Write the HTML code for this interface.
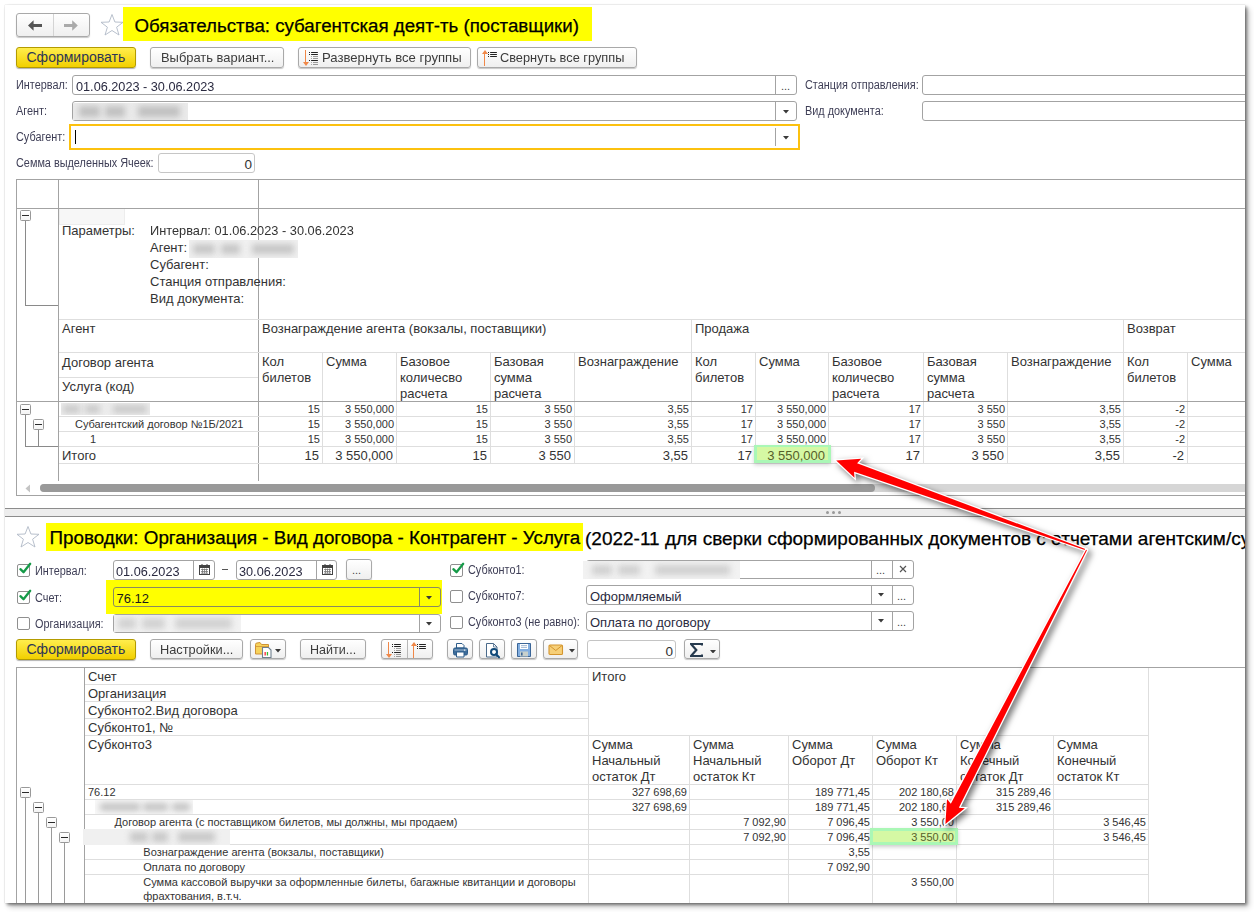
<!DOCTYPE html>
<html><head><meta charset="utf-8">
<style>
*{margin:0;padding:0;box-sizing:border-box}
html,body{width:1254px;height:912px;overflow:hidden;background:#fff;font-family:"Liberation Sans",sans-serif;color:#333}
.a{position:absolute}
.t{position:absolute;white-space:nowrap;line-height:1}
#win{position:absolute;left:5px;top:5px;width:1240px;height:898px;background:#fff;overflow:hidden;
 box-shadow:0 0 1px rgba(0,0,0,.25),2px 2px 3px rgba(0,0,0,.45),4px 4px 6px rgba(0,0,0,.2)}
.btn{position:absolute;border:1px solid #a9a9a9;border-radius:3px;background:linear-gradient(#fff,#efefef);box-shadow:0 1px 1px rgba(0,0,0,.22)}
.ybtn{position:absolute;border:1px solid #c9a400;border-radius:3px;background:linear-gradient(#ffe94a,#f5cf00);box-shadow:0 1px 1px rgba(0,0,0,.3)}
.fld{position:absolute;border:1px solid #a3a3a3;border-radius:3px;background:#fff}
.tb{position:absolute;width:11px;height:11px;border:1px solid #999;border-radius:1.5px;background:linear-gradient(#fff,#f4f4f4)}
.tb:after{content:"";position:absolute;left:1px;top:4px;width:7px;height:1.2px;background:#2a2a2a}
</style></head><body>
<div id="win"><div id="pg" class="a" style="left:-5px;top:-5px;width:1254px;height:912px">
<div class="a" style="left:16px;top:13px;width:74px;height:24px;border:1px solid #a9a9a9;border-radius:3px;background:linear-gradient(#fff,#efefef);box-shadow:0 1px 1px rgba(0,0,0,.22)"></div>
<div class="a" style="left:53px;top:14px;width:1px;height:22px;background:#d4d4d4"></div>
<svg class="a" style="left:27px;top:19.8px" width="16" height="12" viewBox="0 0 16 12"><path d="M1 5.5 L6.6 0.3 L6.6 4 L15 4 L15 7 L6.6 7 L6.6 10.8 Z" fill="#555"/></svg>
<svg class="a" style="left:63px;top:19.8px" width="16" height="12" viewBox="0 0 16 12"><path d="M14.8 5.5 L9.2 0.3 L9.2 4 L1 4 L1 7 L9.2 7 L9.2 10.8 Z" fill="#aaa"/></svg>
<svg class="a" style="left:100px;top:13px" width="24" height="24" viewBox="0 0 24 24"><path d="M12 1.5 L14.9 9 L23 9.3 L16.6 14.2 L19 22 L12 17.5 L5 22 L7.4 14.2 L1 9.3 L9.1 9 Z" fill="#fff" stroke="#b0b9c6" stroke-width="0.9"/></svg>
<div class="a" style="left:123px;top:7px;width:469px;height:34px;background:#ff0"></div>
<div class="t" style="left:134.5px;top:16.67px;font-size:18.7px;color:#000;-webkit-text-stroke:0.25px #000">Обязательства: субагентская деят-ть (поставщики)</div>
<div class="a" style="left:16px;top:47px;width:120px;height:21px;border:1px solid #b39b00;border-radius:3px;background:linear-gradient(#ffed4d,#f2d000);box-shadow:0 1px 1px rgba(0,0,0,.3)"></div>
<div class="t" style="left:26.5px;top:50.15px;font-size:14px;color:#2c3556;">Сформировать</div>
<div class="a" style="left:150px;top:47px;width:134px;height:21px;border:1px solid #a9a9a9;border-radius:3px;background:linear-gradient(#fff,#efefef);box-shadow:0 1px 1px rgba(0,0,0,.22)"></div>
<div class="t" style="left:160.5px;top:51.49px;font-size:13.6px;color:#3c3c3c;transform:scaleX(0.95);transform-origin:0 0;">Выбрать вариант...</div>
<div class="a" style="left:298px;top:47px;width:173px;height:21px;border:1px solid #a9a9a9;border-radius:3px;background:linear-gradient(#fff,#efefef);box-shadow:0 1px 1px rgba(0,0,0,.22)"></div>
<div class="t" style="left:321.5px;top:51.49px;font-size:13.6px;color:#3c3c3c;transform:scaleX(0.965);transform-origin:0 0;">Развернуть все группы</div>
<div class="a" style="left:477px;top:47px;width:160px;height:21px;border:1px solid #a9a9a9;border-radius:3px;background:linear-gradient(#fff,#efefef);box-shadow:0 1px 1px rgba(0,0,0,.22)"></div>
<div class="t" style="left:500px;top:51.49px;font-size:13.6px;color:#3c3c3c;transform:scaleX(0.94);transform-origin:0 0;">Свернуть все группы</div>
<div class="a" style="left:304.75px;top:50.0px;width:1.5px;height:12px;background:#f08848"></div>
<svg class="a" style="left:302.5px;top:61.5px" width="6" height="4" viewBox="0 0 6 4"><path d="M0 0 L6 0 L3 4 Z" fill="#f08848"/></svg>
<div class="a" style="left:309.0px;top:51.9px;width:1.3000000000000114px;height:1.3000000000000043px;background:#222"></div>
<div class="a" style="left:311.0px;top:51.9px;width:6.699999999999989px;height:1.3000000000000043px;background:#222;border-radius:1px"></div>
<div class="a" style="left:309.0px;top:53.9px;width:1.3000000000000114px;height:1.3000000000000043px;background:#222"></div>
<div class="a" style="left:311.0px;top:53.9px;width:6.699999999999989px;height:1.3000000000000043px;background:#222;border-radius:1px"></div>
<div class="a" style="left:311.0px;top:56.0px;width:1.1999999999999886px;height:1.1000000000000014px;background:#aaa"></div>
<div class="a" style="left:313.0px;top:56.0px;width:4.699999999999989px;height:1.1000000000000014px;background:#999"></div>
<div class="a" style="left:311.0px;top:58.0px;width:1.1999999999999886px;height:1.1000000000000014px;background:#aaa"></div>
<div class="a" style="left:313.0px;top:58.0px;width:4.699999999999989px;height:1.1000000000000014px;background:#999"></div>
<div class="a" style="left:309.0px;top:59.9px;width:1.3000000000000114px;height:1.3000000000000043px;background:#222"></div>
<div class="a" style="left:311.0px;top:59.9px;width:6.699999999999989px;height:1.3000000000000043px;background:#222;border-radius:1px"></div>
<div class="a" style="left:311.0px;top:62.0px;width:1.1999999999999886px;height:1.1000000000000014px;background:#aaa"></div>
<div class="a" style="left:313.0px;top:62.0px;width:4.699999999999989px;height:1.1000000000000014px;background:#999"></div>
<div class="a" style="left:311.0px;top:64.0px;width:1.1999999999999886px;height:1.0999999999999943px;background:#aaa"></div>
<div class="a" style="left:313.0px;top:64.0px;width:4.699999999999989px;height:1.0999999999999943px;background:#999"></div>
<div class="a" style="left:483.75px;top:53.0px;width:1.5px;height:12.5px;background:#f08848"></div>
<svg class="a" style="left:481.5px;top:50.0px" width="6" height="4" viewBox="0 0 6 4"><path d="M0 4 L6 4 L3 0 Z" fill="#f08848"/></svg>
<div class="a" style="left:488.0px;top:51.9px;width:1.3000000000000114px;height:1.3000000000000043px;background:#222"></div>
<div class="a" style="left:490.0px;top:51.9px;width:6.699999999999989px;height:1.3000000000000043px;background:#222;border-radius:1px"></div>
<div class="a" style="left:488.0px;top:53.9px;width:1.3000000000000114px;height:1.3000000000000043px;background:#222"></div>
<div class="a" style="left:490.0px;top:53.9px;width:6.699999999999989px;height:1.3000000000000043px;background:#222;border-radius:1px"></div>
<div class="a" style="left:488.0px;top:55.9px;width:1.3000000000000114px;height:1.3000000000000043px;background:#222"></div>
<div class="a" style="left:490.0px;top:55.9px;width:6.699999999999989px;height:1.3000000000000043px;background:#222;border-radius:1px"></div>
<div class="t" style="left:16px;top:79.42px;font-size:12.5px;color:#3e3e56;transform:scaleX(0.87);transform-origin:0 0;">Интервал:</div>
<div class="a" style="left:72px;top:75px;width:725px;height:20px;border:1px solid #a3a3a3;border-radius:3px;background:#fff"></div>
<div class="a" style="left:775px;top:76px;width:1px;height:18px;background:#a3a3a3"></div>
<div class="t" style="left:781px;top:80.69px;font-size:11px;color:#444;">...</div>
<div class="t" style="left:75.5px;top:79.57px;font-size:13.5px;color:#2a2a40;transform:scaleX(0.94);transform-origin:0 0;">01.06.2023 - 30.06.2023</div>
<div class="t" style="left:16px;top:105.42px;font-size:12.5px;color:#3e3e56;transform:scaleX(0.87);transform-origin:0 0;">Агент:</div>
<div class="a" style="left:72px;top:101px;width:725px;height:20px;border:1px solid #a3a3a3;border-radius:3px;background:#fff"></div>
<div class="a" style="left:73px;top:103px;width:115px;height:17px;background:#eaeaea;overflow:hidden"><div class="a" style="left:6px;top:3.4px;width:21px;height:10.2px;background:#c0c0c0;filter:blur(3px)"></div><div class="a" style="left:32px;top:3.4px;width:20px;height:10.2px;background:#c0c0c0;filter:blur(3px)"></div><div class="a" style="left:65px;top:3.4px;width:42px;height:10.2px;background:#c0c0c0;filter:blur(3px)"></div></div>
<div class="a" style="left:775px;top:102px;width:1px;height:18px;background:#a3a3a3"></div>
<svg class="a" style="left:783px;top:110px" width="6" height="3.5" viewBox="0 0 6 3.5"><path d="M0 0 L6 0 L3 3.5 Z" fill="#3a3a3a"/></svg>
<div class="t" style="left:16px;top:131.42px;font-size:12.5px;color:#3e3e56;transform:scaleX(0.87);transform-origin:0 0;">Субагент:</div>
<div class="a" style="left:69px;top:124px;width:731px;height:26px;border:2px solid #fcc10f"></div>
<div class="a" style="left:75px;top:130px;width:1px;height:14px;background:#000"></div>
<div class="a" style="left:775px;top:128px;width:1px;height:18px;background:#a3a3a3"></div>
<svg class="a" style="left:783px;top:136px" width="6" height="3.5" viewBox="0 0 6 3.5"><path d="M0 0 L6 0 L3 3.5 Z" fill="#3a3a3a"/></svg>
<div class="t" style="left:16px;top:157.42px;font-size:12.5px;color:#3e3e56;transform:scaleX(0.87);transform-origin:0 0;">Семма выделенных Ячеек:</div>
<div class="a" style="left:158px;top:153px;width:97px;height:20px;border:1px solid #c6c6c6;border-radius:3px;background:#fff"></div>
<div class="t" style="right:1002px;top:157.57px;font-size:13.5px;color:#333;">0</div>
<div class="t" style="left:805px;top:79.42px;font-size:12.5px;color:#3e3e56;transform:scaleX(0.87);transform-origin:0 0;">Станция отправления:</div>
<div class="a" style="left:922px;top:75px;width:340px;height:20px;border:1px solid #a3a3a3;border-radius:3px;background:#fff"></div>
<div class="t" style="left:805px;top:105.42px;font-size:12.5px;color:#3e3e56;transform:scaleX(0.87);transform-origin:0 0;">Вид документа:</div>
<div class="a" style="left:922px;top:101px;width:340px;height:20px;border:1px solid #a3a3a3;border-radius:3px;background:#fff"></div>
<div class="a" style="left:16px;top:179px;width:1229px;height:1px;background:#a3a3a3"></div>
<div class="a" style="left:16px;top:179px;width:1px;height:317px;background:#a3a3a3"></div>
<div class="a" style="left:16px;top:495px;width:1229px;height:1px;background:#a3a3a3"></div>
<div class="a" style="left:16px;top:208px;width:1229px;height:1px;background:#a3a3a3"></div>
<div class="a" style="left:58px;top:179px;width:1px;height:302px;background:#a3a3a3"></div>
<div class="a" style="left:258px;top:179px;width:1px;height:302px;background:#a3a3a3"></div>
<div class="a" style="left:59px;top:209px;width:66px;height:16px;background:#f7f7f7;border:1.5px solid #ededed;border-top:0"></div>
<div class="tb" style="left:20px;top:210px"></div>
<div class="a" style="left:25px;top:221px;width:1px;height:85px;background:#8a8a8a"></div>
<div class="a" style="left:25px;top:305px;width:33px;height:1px;background:#8a8a8a"></div>
<div class="t" style="left:62px;top:224.00px;font-size:13px;color:#333;">Параметры:</div>
<div class="t" style="left:150px;top:224.00px;font-size:13px;color:#333;transform:scaleX(0.983);transform-origin:0 0;">Интервал: 01.06.2023 - 30.06.2023</div>
<div class="t" style="left:150px;top:241.00px;font-size:13px;color:#333;">Агент:</div>
<div class="a" style="left:189px;top:240px;width:109px;height:18px;background:#f0f0f0;overflow:hidden"><div class="a" style="left:4px;top:3.6px;width:22px;height:10.8px;background:#c6c6c6;filter:blur(3px)"></div><div class="a" style="left:32px;top:3.6px;width:19px;height:10.8px;background:#c6c6c6;filter:blur(3px)"></div><div class="a" style="left:63px;top:3.6px;width:42px;height:10.8px;background:#c6c6c6;filter:blur(3px)"></div></div>
<div class="t" style="left:150px;top:258.00px;font-size:13px;color:#333;">Субагент:</div>
<div class="t" style="left:150px;top:275.00px;font-size:13px;color:#333;">Станция отправления:</div>
<div class="t" style="left:150px;top:292.00px;font-size:13px;color:#333;">Вид документа:</div>
<div class="a" style="left:59px;top:319px;width:1186px;height:1px;background:#dedede"></div>
<div class="a" style="left:59px;top:352px;width:1186px;height:1px;background:#dedede"></div>
<div class="a" style="left:59px;top:377px;width:199px;height:1px;background:#dedede"></div>
<div class="a" style="left:691px;top:319px;width:1px;height:144px;background:#dedede"></div>
<div class="a" style="left:1123px;top:319px;width:1px;height:144px;background:#dedede"></div>
<div class="a" style="left:322px;top:352px;width:1px;height:111px;background:#dedede"></div>
<div class="a" style="left:396px;top:352px;width:1px;height:111px;background:#dedede"></div>
<div class="a" style="left:490px;top:352px;width:1px;height:111px;background:#dedede"></div>
<div class="a" style="left:574px;top:352px;width:1px;height:111px;background:#dedede"></div>
<div class="a" style="left:755px;top:352px;width:1px;height:111px;background:#dedede"></div>
<div class="a" style="left:828px;top:352px;width:1px;height:111px;background:#dedede"></div>
<div class="a" style="left:923px;top:352px;width:1px;height:111px;background:#dedede"></div>
<div class="a" style="left:1007px;top:352px;width:1px;height:111px;background:#dedede"></div>
<div class="a" style="left:1187px;top:352px;width:1px;height:111px;background:#dedede"></div>
<div class="t" style="left:62px;top:322.00px;font-size:13px;color:#333;">Агент</div>
<div class="t" style="left:262px;top:322.00px;font-size:13px;color:#333;">Вознаграждение агента (вокзалы, поставщики)</div>
<div class="t" style="left:695px;top:322.00px;font-size:13px;color:#333;">Продажа</div>
<div class="t" style="left:1127px;top:322.00px;font-size:13px;color:#333;">Возврат</div>
<div class="t" style="left:62px;top:355.50px;font-size:13px;color:#333;">Договор агента</div>
<div class="t" style="left:62px;top:379.80px;font-size:13px;color:#333;">Услуга (код)</div>
<div class="t" style="left:262px;top:355.00px;font-size:13px;color:#333;">Кол</div>
<div class="t" style="left:262px;top:371.00px;font-size:13px;color:#333;">билетов</div>
<div class="t" style="left:326px;top:355.00px;font-size:13px;color:#333;">Сумма</div>
<div class="t" style="left:400px;top:355.00px;font-size:13px;color:#333;">Базовое</div>
<div class="t" style="left:400px;top:371.00px;font-size:13px;color:#333;">количесво</div>
<div class="t" style="left:400px;top:387.00px;font-size:13px;color:#333;">расчета</div>
<div class="t" style="left:494px;top:355.00px;font-size:13px;color:#333;">Базовая</div>
<div class="t" style="left:494px;top:371.00px;font-size:13px;color:#333;">сумма</div>
<div class="t" style="left:494px;top:387.00px;font-size:13px;color:#333;">расчета</div>
<div class="t" style="left:578px;top:355.00px;font-size:13px;color:#333;">Вознаграждение</div>
<div class="t" style="left:695px;top:355.00px;font-size:13px;color:#333;">Кол</div>
<div class="t" style="left:695px;top:371.00px;font-size:13px;color:#333;">билетов</div>
<div class="t" style="left:759px;top:355.00px;font-size:13px;color:#333;">Сумма</div>
<div class="t" style="left:832px;top:355.00px;font-size:13px;color:#333;">Базовое</div>
<div class="t" style="left:832px;top:371.00px;font-size:13px;color:#333;">количесво</div>
<div class="t" style="left:832px;top:387.00px;font-size:13px;color:#333;">расчета</div>
<div class="t" style="left:927px;top:355.00px;font-size:13px;color:#333;">Базовая</div>
<div class="t" style="left:927px;top:371.00px;font-size:13px;color:#333;">сумма</div>
<div class="t" style="left:927px;top:387.00px;font-size:13px;color:#333;">расчета</div>
<div class="t" style="left:1011px;top:355.00px;font-size:13px;color:#333;">Вознаграждение</div>
<div class="t" style="left:1127px;top:355.00px;font-size:13px;color:#333;">Кол</div>
<div class="t" style="left:1127px;top:371.00px;font-size:13px;color:#333;">билетов</div>
<div class="t" style="left:1191px;top:355.00px;font-size:13px;color:#333;">Сумма</div>
<div class="a" style="left:16px;top:401px;width:1229px;height:1px;background:#a3a3a3"></div>
<div class="a" style="left:59px;top:416px;width:1186px;height:1px;background:#dedede"></div>
<div class="a" style="left:59px;top:431px;width:1186px;height:1px;background:#dedede"></div>
<div class="a" style="left:59px;top:446px;width:1186px;height:1px;background:#dedede"></div>
<div class="a" style="left:59px;top:463px;width:1186px;height:1px;background:#dedede"></div>
<div class="tb" style="left:20px;top:404px"></div>
<div class="tb" style="left:33px;top:419px"></div>
<div class="a" style="left:25px;top:415px;width:1px;height:32px;background:#8a8a8a"></div>
<div class="a" style="left:38px;top:430px;width:1px;height:17px;background:#8a8a8a"></div>
<div class="a" style="left:25px;top:446px;width:33px;height:1px;background:#8a8a8a"></div>
<div class="a" style="left:61px;top:403px;width:89px;height:12px;background:#ededed;overflow:hidden"><div class="a" style="left:2px;top:2.4px;width:17px;height:7.2px;background:#c8c8c8;filter:blur(3px)"></div><div class="a" style="left:24px;top:2.4px;width:15px;height:7.2px;background:#c8c8c8;filter:blur(3px)"></div><div class="a" style="left:52px;top:2.4px;width:34px;height:7.2px;background:#c8c8c8;filter:blur(3px)"></div></div>
<div class="t" style="left:75px;top:418.69px;font-size:11px;color:#333;">Субагентский договор №1Б/2021</div>
<div class="t" style="left:90px;top:433.59px;font-size:11px;color:#333;">1</div>
<div class="t" style="left:62px;top:449.00px;font-size:13px;color:#333;">Итого</div>
<div class="a" style="left:754px;top:445px;width:77px;height:18px;background:#aaf7b6;box-shadow:0 2px 4px rgba(0,0,0,.18)"></div>
<div class="a" style="left:757px;top:447px;width:71px;height:13px;background:#d5f8a4"></div>
<div class="t" style="right:934px;top:403.79px;font-size:11px;color:#333;">15</div>
<div class="t" style="right:860px;top:403.79px;font-size:11px;color:#333;">3 550,000</div>
<div class="t" style="right:766px;top:403.79px;font-size:11px;color:#333;">15</div>
<div class="t" style="right:682px;top:403.79px;font-size:11px;color:#333;">3 550</div>
<div class="t" style="right:565px;top:403.79px;font-size:11px;color:#333;">3,55</div>
<div class="t" style="right:501px;top:403.79px;font-size:11px;color:#333;">17</div>
<div class="t" style="right:428px;top:403.79px;font-size:11px;color:#333;">3 550,000</div>
<div class="t" style="right:333px;top:403.79px;font-size:11px;color:#333;">17</div>
<div class="t" style="right:249px;top:403.79px;font-size:11px;color:#333;">3 550</div>
<div class="t" style="right:133px;top:403.79px;font-size:11px;color:#333;">3,55</div>
<div class="t" style="right:69px;top:403.79px;font-size:11px;color:#333;">-2</div>
<div class="t" style="right:934px;top:418.69px;font-size:11px;color:#333;">15</div>
<div class="t" style="right:860px;top:418.69px;font-size:11px;color:#333;">3 550,000</div>
<div class="t" style="right:766px;top:418.69px;font-size:11px;color:#333;">15</div>
<div class="t" style="right:682px;top:418.69px;font-size:11px;color:#333;">3 550</div>
<div class="t" style="right:565px;top:418.69px;font-size:11px;color:#333;">3,55</div>
<div class="t" style="right:501px;top:418.69px;font-size:11px;color:#333;">17</div>
<div class="t" style="right:428px;top:418.69px;font-size:11px;color:#333;">3 550,000</div>
<div class="t" style="right:333px;top:418.69px;font-size:11px;color:#333;">17</div>
<div class="t" style="right:249px;top:418.69px;font-size:11px;color:#333;">3 550</div>
<div class="t" style="right:133px;top:418.69px;font-size:11px;color:#333;">3,55</div>
<div class="t" style="right:69px;top:418.69px;font-size:11px;color:#333;">-2</div>
<div class="t" style="right:934px;top:433.59px;font-size:11px;color:#333;">15</div>
<div class="t" style="right:860px;top:433.59px;font-size:11px;color:#333;">3 550,000</div>
<div class="t" style="right:766px;top:433.59px;font-size:11px;color:#333;">15</div>
<div class="t" style="right:682px;top:433.59px;font-size:11px;color:#333;">3 550</div>
<div class="t" style="right:565px;top:433.59px;font-size:11px;color:#333;">3,55</div>
<div class="t" style="right:501px;top:433.59px;font-size:11px;color:#333;">17</div>
<div class="t" style="right:428px;top:433.59px;font-size:11px;color:#333;">3 550,000</div>
<div class="t" style="right:333px;top:433.59px;font-size:11px;color:#333;">17</div>
<div class="t" style="right:249px;top:433.59px;font-size:11px;color:#333;">3 550</div>
<div class="t" style="right:133px;top:433.59px;font-size:11px;color:#333;">3,55</div>
<div class="t" style="right:69px;top:433.59px;font-size:11px;color:#333;">-2</div>
<div class="t" style="right:935px;top:448.90px;font-size:13px;color:#333;">15</div>
<div class="t" style="right:861px;top:448.90px;font-size:13px;color:#333;">3 550,000</div>
<div class="t" style="right:767px;top:448.90px;font-size:13px;color:#333;">15</div>
<div class="t" style="right:683px;top:448.90px;font-size:13px;color:#333;">3 550</div>
<div class="t" style="right:566px;top:448.90px;font-size:13px;color:#333;">3,55</div>
<div class="t" style="right:502px;top:448.90px;font-size:13px;color:#333;">17</div>
<div class="t" style="right:429px;top:448.90px;font-size:13px;color:#55602a;">3 550,000</div>
<div class="t" style="right:334px;top:448.90px;font-size:13px;color:#333;">17</div>
<div class="t" style="right:250px;top:448.90px;font-size:13px;color:#333;">3 550</div>
<div class="t" style="right:134px;top:448.90px;font-size:13px;color:#333;">3,55</div>
<div class="t" style="right:70px;top:448.90px;font-size:13px;color:#333;">-2</div>
<svg class="a" style="left:25px;top:484px" width="6" height="9" viewBox="0 0 6 9"><path d="M5 0.5 L0.5 4.5 L5 8.5 Z" fill="#c4c4c4"/></svg>
<div class="a" style="left:40px;top:484px;width:1205px;height:8px;background:#d6d6d6;border-radius:4px 0 0 4px"></div>
<div class="a" style="left:40px;top:484px;width:835px;height:8px;background:#999;border-radius:4px"></div>
<div class="a" style="left:5px;top:508px;width:1240px;height:1px;background:#8c8c8c"></div>
<div class="a" style="left:5px;top:509px;width:1240px;height:7px;background:#ededed"></div>
<div class="a" style="left:5px;top:516px;width:1240px;height:1px;background:#8c8c8c"></div>
<div class="a" style="left:826px;top:511px;width:3px;height:3px;background:#999;border-radius:50%"></div>
<div class="a" style="left:832px;top:511px;width:3px;height:3px;background:#999;border-radius:50%"></div>
<div class="a" style="left:838px;top:511px;width:3px;height:3px;background:#999;border-radius:50%"></div>
<svg class="a" style="left:16px;top:525px" width="24" height="24" viewBox="0 0 24 24"><path d="M12 1.5 L14.9 9 L23 9.3 L16.6 14.2 L19 22 L12 17.5 L5 22 L7.4 14.2 L1 9.3 L9.1 9 Z" fill="#fff" stroke="#b0b9c6" stroke-width="0.9"/></svg>
<div class="a" style="left:46px;top:523px;width:537px;height:28px;background:#ff0"></div>
<div class="t" style="left:49.5px;top:528.89px;font-size:18.8px;color:#000;-webkit-text-stroke:0.25px #000">Проводки: Организация - Вид договора - Контрагент - Услуга</div>
<div class="t" style="left:585px;top:528.72px;font-size:19px;color:#000;-webkit-text-stroke:0.25px #000">(2022-11 для сверки сформированных документов с отчетами агентским/субагентским договорам)</div>
<div class="a" style="left:17px;top:564px;width:13px;height:13px;border:1px solid #8f8f8f;border-radius:2px;background:#fff"></div>
<svg class="a" style="left:18px;top:561px" width="14" height="15" viewBox="0 0 14 15"><path d="M2.4 8.2 L5.5 11.2 L12.2 2.8" fill="none" stroke="#159a48" stroke-width="2.3" stroke-linecap="round" stroke-linejoin="round"/></svg>
<div class="t" style="left:35px;top:565.42px;font-size:12.5px;color:#3e3e56;transform:scaleX(0.87);transform-origin:0 0;">Интервал:</div>
<div class="a" style="left:17px;top:591px;width:13px;height:13px;border:1px solid #8f8f8f;border-radius:2px;background:#fff"></div>
<svg class="a" style="left:18px;top:588px" width="14" height="15" viewBox="0 0 14 15"><path d="M2.4 8.2 L5.5 11.2 L12.2 2.8" fill="none" stroke="#159a48" stroke-width="2.3" stroke-linecap="round" stroke-linejoin="round"/></svg>
<div class="t" style="left:35px;top:592.42px;font-size:12.5px;color:#3e3e56;transform:scaleX(0.87);transform-origin:0 0;">Счет:</div>
<div class="a" style="left:17px;top:617px;width:13px;height:13px;border:1px solid #8f8f8f;border-radius:2px;background:#fff"></div>
<div class="t" style="left:35px;top:618.42px;font-size:12.5px;color:#3e3e56;transform:scaleX(0.87);transform-origin:0 0;">Организация:</div>
<div class="a" style="left:113px;top:560px;width:102px;height:20px;border:1px solid #a3a3a3;border-radius:3px;background:#fff"></div>
<div class="a" style="left:193px;top:561px;width:1px;height:18px;background:#a3a3a3"></div>
<svg class="a" style="left:199px;top:564px" width="11" height="11" viewBox="0 0 11 11"><rect x="0.5" y="1.5" width="10" height="9" fill="#fff" stroke="#444"/><rect x="0.5" y="1.5" width="10" height="2.5" fill="#444"/><rect x="2.5" y="0" width="1" height="2" fill="#444"/><rect x="7.5" y="0" width="1" height="2" fill="#444"/><path d="M2 5.5h7M2 7.5h7M2 9.2h7M3.5 4.5v5M5.5 4.5v5M7.5 4.5v5" stroke="#777" stroke-width="0.8"/></svg>
<div class="t" style="left:116px;top:564.57px;font-size:13.5px;color:#2a2a40;transform:scaleX(0.94);transform-origin:0 0;">01.06.2023</div>
<div class="a" style="left:222px;top:569px;width:6px;height:1px;background:#555"></div>
<div class="a" style="left:236px;top:560px;width:101px;height:20px;border:1px solid #a3a3a3;border-radius:3px;background:#fff"></div>
<div class="a" style="left:316px;top:561px;width:1px;height:18px;background:#a3a3a3"></div>
<svg class="a" style="left:322px;top:564px" width="11" height="11" viewBox="0 0 11 11"><rect x="0.5" y="1.5" width="10" height="9" fill="#fff" stroke="#444"/><rect x="0.5" y="1.5" width="10" height="2.5" fill="#444"/><rect x="2.5" y="0" width="1" height="2" fill="#444"/><rect x="7.5" y="0" width="1" height="2" fill="#444"/><path d="M2 5.5h7M2 7.5h7M2 9.2h7M3.5 4.5v5M5.5 4.5v5M7.5 4.5v5" stroke="#777" stroke-width="0.8"/></svg>
<div class="t" style="left:238.7px;top:564.57px;font-size:13.5px;color:#2a2a40;transform:scaleX(0.94);transform-origin:0 0;">30.06.2023</div>
<div class="a" style="left:346px;top:559px;width:26px;height:21px;border:1px solid #a9a9a9;border-radius:3px;background:linear-gradient(#fff,#efefef);box-shadow:0 1px 1px rgba(0,0,0,.22)"></div>
<div class="t" style="left:352px;top:564.69px;font-size:11px;color:#444;">...</div>
<div class="a" style="left:106px;top:580px;width:336px;height:34px;background:#ff0"></div>
<div class="a" style="left:113px;top:587px;width:328px;height:20px;border:1px solid #8a8a60;border-radius:3px"></div>
<div class="a" style="left:419px;top:588px;width:1px;height:18px;background:#8a8a60"></div>
<svg class="a" style="left:426px;top:596px" width="6" height="3.5" viewBox="0 0 6 3.5"><path d="M0 0 L6 0 L3 3.5 Z" fill="#3a3a3a"/></svg>
<div class="t" style="left:116.5px;top:591.50px;font-size:13px;color:#1a1a1a;">76.12</div>
<div class="a" style="left:113px;top:614px;width:328px;height:19px;border:1px solid #a3a3a3;border-radius:3px;background:#fff"></div>
<div class="a" style="left:114px;top:615px;width:127px;height:17px;background:#f2f2f2;overflow:hidden"><div class="a" style="left:4px;top:3.4px;width:18px;height:10.2px;background:#d2d2d2;filter:blur(3px)"></div><div class="a" style="left:28px;top:3.4px;width:23px;height:10.2px;background:#d2d2d2;filter:blur(3px)"></div><div class="a" style="left:61px;top:3.4px;width:57px;height:10.2px;background:#d2d2d2;filter:blur(3px)"></div></div>
<div class="a" style="left:419px;top:615px;width:1px;height:17px;background:#a3a3a3"></div>
<svg class="a" style="left:426px;top:622px" width="6" height="3.5" viewBox="0 0 6 3.5"><path d="M0 0 L6 0 L3 3.5 Z" fill="#3a3a3a"/></svg>
<div class="a" style="left:450px;top:564px;width:13px;height:13px;border:1px solid #8f8f8f;border-radius:2px;background:#fff"></div>
<svg class="a" style="left:451px;top:561px" width="14" height="15" viewBox="0 0 14 15"><path d="M2.4 8.2 L5.5 11.2 L12.2 2.8" fill="none" stroke="#159a48" stroke-width="2.3" stroke-linecap="round" stroke-linejoin="round"/></svg>
<div class="t" style="left:468px;top:564.42px;font-size:12.5px;color:#3e3e56;transform:scaleX(0.87);transform-origin:0 0;">Субконто1:</div>
<div class="a" style="left:450px;top:590px;width:13px;height:13px;border:1px solid #8f8f8f;border-radius:2px;background:#fff"></div>
<div class="t" style="left:468px;top:590.42px;font-size:12.5px;color:#3e3e56;transform:scaleX(0.87);transform-origin:0 0;">Субконто7:</div>
<div class="a" style="left:450px;top:616px;width:13px;height:13px;border:1px solid #8f8f8f;border-radius:2px;background:#fff"></div>
<div class="t" style="left:468px;top:616.42px;font-size:12.5px;color:#3e3e56;transform:scaleX(0.87);transform-origin:0 0;">Субконто3 (не равно):</div>
<div class="a" style="left:586px;top:560px;width:328px;height:19px;border:1px solid #a3a3a3;border-radius:3px;background:#fff"></div>
<div class="a" style="left:583px;top:561px;width:157px;height:18px;background:#f2f2f2;overflow:hidden"><div class="a" style="left:9px;top:3.6px;width:20px;height:10.8px;background:#d0d0d0;filter:blur(3px)"></div><div class="a" style="left:35px;top:3.6px;width:22px;height:10.8px;background:#d0d0d0;filter:blur(3px)"></div><div class="a" style="left:72px;top:3.6px;width:75px;height:10.8px;background:#d0d0d0;filter:blur(3px)"></div></div>
<div class="a" style="left:871px;top:561px;width:1px;height:17px;background:#a3a3a3"></div>
<div class="a" style="left:892px;top:561px;width:1px;height:17px;background:#a3a3a3"></div>
<div class="t" style="left:876px;top:564.69px;font-size:11px;color:#444;">...</div>
<svg class="a" style="left:899px;top:565px" width="8" height="8" viewBox="0 0 8 8"><path d="M1 1 L7 7 M7 1 L1 7" stroke="#555" stroke-width="1.2"/></svg>
<div class="a" style="left:586px;top:585px;width:328px;height:20px;border:1px solid #a3a3a3;border-radius:3px;background:#fff"></div>
<div class="a" style="left:871px;top:586px;width:1px;height:18px;background:#a3a3a3"></div>
<div class="a" style="left:892px;top:586px;width:1px;height:18px;background:#a3a3a3"></div>
<svg class="a" style="left:878px;top:593px" width="6" height="3.5" viewBox="0 0 6 3.5"><path d="M0 0 L6 0 L3 3.5 Z" fill="#3a3a3a"/></svg>
<div class="t" style="left:897px;top:590.69px;font-size:11px;color:#444;">...</div>
<div class="t" style="left:590px;top:589.50px;font-size:13px;color:#2a2a40;">Оформляемый</div>
<div class="a" style="left:586px;top:611px;width:328px;height:20px;border:1px solid #a3a3a3;border-radius:3px;background:#fff"></div>
<div class="a" style="left:871px;top:612px;width:1px;height:18px;background:#a3a3a3"></div>
<div class="a" style="left:892px;top:612px;width:1px;height:18px;background:#a3a3a3"></div>
<svg class="a" style="left:878px;top:619px" width="6" height="3.5" viewBox="0 0 6 3.5"><path d="M0 0 L6 0 L3 3.5 Z" fill="#3a3a3a"/></svg>
<div class="t" style="left:897px;top:616.69px;font-size:11px;color:#444;">...</div>
<div class="t" style="left:590px;top:615.50px;font-size:13px;color:#2a2a40;">Оплата по договору</div>
<div class="a" style="left:16px;top:639px;width:120px;height:21px;border:1px solid #b39b00;border-radius:3px;background:linear-gradient(#ffed4d,#f2d000);box-shadow:0 1px 1px rgba(0,0,0,.3)"></div>
<div class="t" style="left:26.5px;top:642.15px;font-size:14px;color:#2c3556;">Сформировать</div>
<div class="a" style="left:150px;top:639px;width:93px;height:20px;border:1px solid #a9a9a9;border-radius:3px;background:linear-gradient(#fff,#efefef);box-shadow:0 1px 1px rgba(0,0,0,.22)"></div>
<div class="t" style="left:160.3px;top:643.49px;font-size:13.6px;color:#3c3c3c;transform:scaleX(0.94);transform-origin:0 0;">Настройки...</div>
<div class="a" style="left:250px;top:639px;width:36px;height:20px;border:1px solid #a9a9a9;border-radius:3px;background:linear-gradient(#fff,#efefef);box-shadow:0 1px 1px rgba(0,0,0,.22)"></div>
<svg class="a" style="left:254px;top:641px" width="20" height="18" viewBox="0 0 20 18"><path d="M1.5 3.5 Q1.5 2 3 2 L6 1.5 L7.5 3.5 L14.5 3.5 L14.5 13 L1.5 13 Z" fill="#f7d35a" stroke="#cf9236" stroke-width="1"/><path d="M1.5 5.5 L14.5 5.5" stroke="#cf9236" stroke-width="0.8"/><path d="M8.5 6.5 L14.5 6.5 L17 9 L17 16.5 L8.5 16.5 Z" fill="#fff" stroke="#70808e" stroke-width="1.1"/><rect x="10.5" y="11" width="1.3" height="3.5" fill="#f23"/><rect x="12.8" y="11" width="1.3" height="3.5" fill="#3b3"/></svg>
<svg class="a" style="left:275px;top:649px" width="6" height="3.5" viewBox="0 0 6 3.5"><path d="M0 0 L6 0 L3 3.5 Z" fill="#3a3a3a"/></svg>
<div class="a" style="left:300px;top:639px;width:66px;height:20px;border:1px solid #a9a9a9;border-radius:3px;background:linear-gradient(#fff,#efefef);box-shadow:0 1px 1px rgba(0,0,0,.22)"></div>
<div class="t" style="left:310.3px;top:643.49px;font-size:13.6px;color:#3c3c3c;transform:scaleX(0.92);transform-origin:0 0;">Найти...</div>
<div class="a" style="left:381px;top:639px;width:52px;height:20px;border:1px solid #a9a9a9;border-radius:3px;background:linear-gradient(#fff,#efefef);box-shadow:0 1px 1px rgba(0,0,0,.22)"></div>
<div class="a" style="left:407px;top:640px;width:1px;height:18px;background:#b8b8b8"></div>
<div class="a" style="left:387.75px;top:642.0px;width:1.5px;height:12px;background:#f08848"></div>
<svg class="a" style="left:385.5px;top:653.5px" width="6" height="4" viewBox="0 0 6 4"><path d="M0 0 L6 0 L3 4 Z" fill="#f08848"/></svg>
<div class="a" style="left:392.0px;top:643.9px;width:1.3000000000000114px;height:1.3000000000000682px;background:#222"></div>
<div class="a" style="left:394.0px;top:643.9px;width:6.699999999999989px;height:1.3000000000000682px;background:#222;border-radius:1px"></div>
<div class="a" style="left:392.0px;top:645.9px;width:1.3000000000000114px;height:1.3000000000000682px;background:#222"></div>
<div class="a" style="left:394.0px;top:645.9px;width:6.699999999999989px;height:1.3000000000000682px;background:#222;border-radius:1px"></div>
<div class="a" style="left:394.0px;top:648.0px;width:1.1999999999999886px;height:1.1000000000000227px;background:#aaa"></div>
<div class="a" style="left:396.0px;top:648.0px;width:4.699999999999989px;height:1.1000000000000227px;background:#999"></div>
<div class="a" style="left:394.0px;top:650.0px;width:1.1999999999999886px;height:1.1000000000000227px;background:#aaa"></div>
<div class="a" style="left:396.0px;top:650.0px;width:4.699999999999989px;height:1.1000000000000227px;background:#999"></div>
<div class="a" style="left:392.0px;top:651.9px;width:1.3000000000000114px;height:1.3000000000000682px;background:#222"></div>
<div class="a" style="left:394.0px;top:651.9px;width:6.699999999999989px;height:1.3000000000000682px;background:#222;border-radius:1px"></div>
<div class="a" style="left:394.0px;top:654.0px;width:1.1999999999999886px;height:1.1000000000000227px;background:#aaa"></div>
<div class="a" style="left:396.0px;top:654.0px;width:4.699999999999989px;height:1.1000000000000227px;background:#999"></div>
<div class="a" style="left:394.0px;top:656.0px;width:1.1999999999999886px;height:1.1000000000000227px;background:#aaa"></div>
<div class="a" style="left:396.0px;top:656.0px;width:4.699999999999989px;height:1.1000000000000227px;background:#999"></div>
<div class="a" style="left:412.75px;top:645.0px;width:1.5px;height:12.5px;background:#f08848"></div>
<svg class="a" style="left:410.5px;top:642.0px" width="6" height="4" viewBox="0 0 6 4"><path d="M0 4 L6 4 L3 0 Z" fill="#f08848"/></svg>
<div class="a" style="left:417.0px;top:643.9px;width:1.3000000000000114px;height:1.3000000000000682px;background:#222"></div>
<div class="a" style="left:419.0px;top:643.9px;width:6.699999999999989px;height:1.3000000000000682px;background:#222;border-radius:1px"></div>
<div class="a" style="left:417.0px;top:645.9px;width:1.3000000000000114px;height:1.3000000000000682px;background:#222"></div>
<div class="a" style="left:419.0px;top:645.9px;width:6.699999999999989px;height:1.3000000000000682px;background:#222;border-radius:1px"></div>
<div class="a" style="left:417.0px;top:647.9px;width:1.3000000000000114px;height:1.3000000000000682px;background:#222"></div>
<div class="a" style="left:419.0px;top:647.9px;width:6.699999999999989px;height:1.3000000000000682px;background:#222;border-radius:1px"></div>
<div class="a" style="left:447px;top:639px;width:26px;height:20px;border:1px solid #a9a9a9;border-radius:3px;background:linear-gradient(#fff,#efefef);box-shadow:0 1px 1px rgba(0,0,0,.22)"></div>
<svg class="a" style="left:452px;top:642px" width="16" height="16" viewBox="0 0 16 16"><path d="M4.5 1.5 L10 1.5 L12 3.5 L12 6 L4.5 6 Z" fill="#fff" stroke="#2d5c8a" stroke-width="1"/><rect x="1.5" y="6" width="14" height="7" rx="1.5" fill="#3d6c9a" stroke="#2d5c8a"/><rect x="2.5" y="7.5" width="12" height="1" fill="#9fb8d0"/><rect x="12" y="7.6" width="1.2" height="1" fill="#fff"/><path d="M4.5 10 L12 10 L12 15 L4.5 15 Z" fill="#fff" stroke="#2d5c8a" stroke-width="1"/></svg>
<div class="a" style="left:479px;top:639px;width:26px;height:20px;border:1px solid #a9a9a9;border-radius:3px;background:linear-gradient(#fff,#efefef);box-shadow:0 1px 1px rgba(0,0,0,.22)"></div>
<svg class="a" style="left:485px;top:642px" width="16" height="17" viewBox="0 0 16 17"><path d="M1.5 1.5 L8.5 1.5 L12 5 L12 15 L1.5 15 Z" fill="#fff" stroke="#4a6a8a" stroke-width="1"/><path d="M8.5 1.5 L8.5 5 L12 5" fill="none" stroke="#4a6a8a" stroke-width="0.8"/><circle cx="9" cy="10" r="3" fill="#fff" stroke="#114a7a" stroke-width="2"/><path d="M11 12.3 L14 15.3" stroke="#114a7a" stroke-width="2.2" stroke-linecap="round"/></svg>
<div class="a" style="left:511px;top:639px;width:26px;height:20px;border:1px solid #a9a9a9;border-radius:3px;background:linear-gradient(#fff,#efefef);box-shadow:0 1px 1px rgba(0,0,0,.22)"></div>
<svg class="a" style="left:516px;top:642px" width="16" height="16" viewBox="0 0 16 16"><path d="M1.5 1.5 L14.5 1.5 L14.5 14.5 L1.5 14.5 Z" fill="#82aee0" stroke="#3a6597" stroke-width="1"/><rect x="4" y="2" width="8" height="5" fill="#fff"/><path d="M5 3.6 L11 3.6 M5 5.4 L11 5.4" stroke="#8aa7c7" stroke-width="0.8"/><rect x="4" y="9.5" width="8" height="5" fill="#c8d0cc"/><rect x="5" y="10.5" width="1.6" height="3" fill="#3a6597"/></svg>
<div class="a" style="left:543px;top:639px;width:35px;height:20px;border:1px solid #a9a9a9;border-radius:3px;background:linear-gradient(#fff,#efefef);box-shadow:0 1px 1px rgba(0,0,0,.22)"></div>
<svg class="a" style="left:548px;top:644px" width="16" height="12" viewBox="0 0 16 12"><rect x="1" y="1" width="13.5" height="9.5" rx="1" fill="#f6cf78" stroke="#d4952e" stroke-width="1.1"/><path d="M1.5 1.5 L7.75 6.5 L14 1.5" fill="none" stroke="#d4952e" stroke-width="1"/></svg>
<svg class="a" style="left:568.5px;top:649px" width="6" height="3.5" viewBox="0 0 6 3.5"><path d="M0 0 L6 0 L3 3.5 Z" fill="#3a3a3a"/></svg>
<div class="a" style="left:587px;top:640px;width:89px;height:19px;border:1px solid #c4c4c4;border-radius:3px;background:#fff"></div>
<div class="t" style="right:581px;top:644.57px;font-size:13.5px;color:#333;">0</div>
<div class="a" style="left:684px;top:639px;width:36px;height:20px;border:1px solid #a9a9a9;border-radius:3px;background:linear-gradient(#fff,#efefef);box-shadow:0 1px 1px rgba(0,0,0,.22)"></div>
<svg class="a" style="left:690px;top:643px" width="13" height="14" viewBox="0 0 13 14"><path d="M12 2.5 L12 1 L1 1 L6.3 7 L1 13 L12 13 L12 11.5" fill="none" stroke="#263a4e" stroke-width="2.2" stroke-linejoin="miter"/></svg>
<svg class="a" style="left:709.5px;top:649.5px" width="6" height="3.5" viewBox="0 0 6 3.5"><path d="M0 0 L6 0 L3 3.5 Z" fill="#3a3a3a"/></svg>
<div class="a" style="left:16px;top:667px;width:1229px;height:1px;background:#a3a3a3"></div>
<div class="a" style="left:16px;top:667px;width:1px;height:236px;background:#a3a3a3"></div>
<div class="a" style="left:84px;top:667px;width:1px;height:236px;background:#a3a3a3"></div>
<div class="a" style="left:85px;top:684px;width:503px;height:1px;background:#dedede"></div>
<div class="a" style="left:85px;top:701px;width:503px;height:1px;background:#dedede"></div>
<div class="a" style="left:85px;top:718px;width:503px;height:1px;background:#dedede"></div>
<div class="a" style="left:85px;top:735px;width:1063px;height:1px;background:#dedede"></div>
<div class="a" style="left:85px;top:784px;width:1063px;height:1px;background:#dedede"></div>
<div class="a" style="left:588px;top:668px;width:1px;height:235px;background:#dedede"></div>
<div class="a" style="left:1148px;top:668px;width:1px;height:235px;background:#dedede"></div>
<div class="a" style="left:689px;top:735px;width:1px;height:168px;background:#dedede"></div>
<div class="a" style="left:788px;top:735px;width:1px;height:168px;background:#dedede"></div>
<div class="a" style="left:872px;top:735px;width:1px;height:168px;background:#dedede"></div>
<div class="a" style="left:956px;top:735px;width:1px;height:168px;background:#dedede"></div>
<div class="a" style="left:1053px;top:735px;width:1px;height:168px;background:#dedede"></div>
<div class="a" style="left:85px;top:799px;width:1063px;height:1px;background:#dedede"></div>
<div class="a" style="left:85px;top:814px;width:1063px;height:1px;background:#dedede"></div>
<div class="a" style="left:85px;top:829px;width:1063px;height:1px;background:#dedede"></div>
<div class="a" style="left:85px;top:844px;width:1063px;height:1px;background:#dedede"></div>
<div class="a" style="left:85px;top:859px;width:1063px;height:1px;background:#dedede"></div>
<div class="a" style="left:85px;top:874px;width:1063px;height:1px;background:#dedede"></div>
<div class="t" style="left:88px;top:669.70px;font-size:13px;color:#333;">Счет</div>
<div class="t" style="left:88px;top:686.60px;font-size:13px;color:#333;">Организация</div>
<div class="t" style="left:88px;top:703.50px;font-size:13px;color:#333;">Субконто2.Вид договора</div>
<div class="t" style="left:88px;top:721.00px;font-size:13px;color:#333;">Субконто1, №</div>
<div class="t" style="left:88px;top:737.70px;font-size:13px;color:#333;">Субконто3</div>
<div class="t" style="left:592px;top:670.10px;font-size:13px;color:#333;">Итого</div>
<div class="t" style="left:592px;top:738.00px;font-size:13px;color:#333;">Сумма</div>
<div class="t" style="left:592px;top:754.00px;font-size:13px;color:#333;">Начальный</div>
<div class="t" style="left:592px;top:770.00px;font-size:13px;color:#333;">остаток Дт</div>
<div class="t" style="left:693px;top:738.00px;font-size:13px;color:#333;">Сумма</div>
<div class="t" style="left:693px;top:754.00px;font-size:13px;color:#333;">Начальный</div>
<div class="t" style="left:693px;top:770.00px;font-size:13px;color:#333;">остаток Кт</div>
<div class="t" style="left:792px;top:738.00px;font-size:13px;color:#333;">Сумма</div>
<div class="t" style="left:792px;top:754.00px;font-size:13px;color:#333;">Оборот Дт</div>
<div class="t" style="left:876px;top:738.00px;font-size:13px;color:#333;">Сумма</div>
<div class="t" style="left:876px;top:754.00px;font-size:13px;color:#333;">Оборот Кт</div>
<div class="t" style="left:960px;top:738.00px;font-size:13px;color:#333;">Сумма</div>
<div class="t" style="left:960px;top:754.00px;font-size:13px;color:#333;">Конечный</div>
<div class="t" style="left:960px;top:770.00px;font-size:13px;color:#333;">остаток Дт</div>
<div class="t" style="left:1057px;top:738.00px;font-size:13px;color:#333;">Сумма</div>
<div class="t" style="left:1057px;top:754.00px;font-size:13px;color:#333;">Конечный</div>
<div class="t" style="left:1057px;top:770.00px;font-size:13px;color:#333;">остаток Кт</div>
<div class="tb" style="left:20px;top:787px"></div>
<div class="a" style="left:25px;top:798px;width:1px;height:105px;background:#9a9a9a"></div>
<div class="tb" style="left:33px;top:802px"></div>
<div class="a" style="left:38px;top:813px;width:1px;height:90px;background:#9a9a9a"></div>
<div class="tb" style="left:46px;top:817px"></div>
<div class="a" style="left:51px;top:828px;width:1px;height:75px;background:#9a9a9a"></div>
<div class="tb" style="left:59px;top:832px"></div>
<div class="a" style="left:64px;top:843px;width:1px;height:60px;background:#9a9a9a"></div>
<div class="t" style="left:88px;top:786.69px;font-size:11px;color:#333;">76.12</div>
<div class="a" style="left:95px;top:800px;width:98px;height:14px;background:#f8f8f8;overflow:hidden"><div class="a" style="left:5px;top:2.8px;width:40px;height:8.4px;background:#c2c2c2;filter:blur(3px)"></div><div class="a" style="left:48px;top:2.8px;width:25px;height:8.4px;background:#c2c2c2;filter:blur(3px)"></div><div class="a" style="left:77px;top:2.8px;width:18px;height:8.4px;background:#c2c2c2;filter:blur(3px)"></div></div>
<div class="t" style="left:114.5px;top:816.69px;font-size:11px;color:#333;">Договор агента (с поставщиком билетов, мы должны, мы продаем)</div>
<div class="a" style="left:83px;top:829px;width:147px;height:16px;background:#f0f0f0;overflow:hidden"><div class="a" style="left:47px;top:3.2px;width:18px;height:9.6px;background:#c8c8c8;filter:blur(3px)"></div><div class="a" style="left:69px;top:3.2px;width:16px;height:9.6px;background:#c8c8c8;filter:blur(3px)"></div><div class="a" style="left:95px;top:3.2px;width:37px;height:9.6px;background:#c8c8c8;filter:blur(3px)"></div></div>
<div class="t" style="left:143.3px;top:846.69px;font-size:11px;color:#333;">Вознаграждение агента (вокзалы, поставщики)</div>
<div class="t" style="left:143.3px;top:861.69px;font-size:11px;color:#333;">Оплата по договору</div>
<div class="t" style="left:143.3px;top:876.69px;font-size:11px;color:#333;">Сумма кассовой выручки за оформленные билеты, багажные квитанции и договоры</div>
<div class="t" style="left:143.3px;top:890.69px;font-size:11px;color:#333;">фрахтования, в.т.ч.</div>
<div class="a" style="left:870px;top:828px;width:88px;height:17px;background:#aaf7b6;box-shadow:0 2px 4px rgba(0,0,0,.2)"></div>
<div class="a" style="left:873px;top:831px;width:82px;height:11px;background:#d5f8a4"></div>
<div class="t" style="right:567px;top:786.69px;font-size:11px;color:#333;">327 698,69</div>
<div class="t" style="right:384px;top:786.69px;font-size:11px;color:#333;">189 771,45</div>
<div class="t" style="right:300px;top:786.69px;font-size:11px;color:#333;">202 180,68</div>
<div class="t" style="right:203px;top:786.69px;font-size:11px;color:#333;">315 289,46</div>
<div class="t" style="right:567px;top:801.69px;font-size:11px;color:#333;">327 698,69</div>
<div class="t" style="right:384px;top:801.69px;font-size:11px;color:#333;">189 771,45</div>
<div class="t" style="right:300px;top:801.69px;font-size:11px;color:#333;">202 180,68</div>
<div class="t" style="right:203px;top:801.69px;font-size:11px;color:#333;">315 289,46</div>
<div class="t" style="right:468px;top:816.69px;font-size:11px;color:#333;">7 092,90</div>
<div class="t" style="right:384px;top:816.69px;font-size:11px;color:#333;">7 096,45</div>
<div class="t" style="right:300px;top:816.69px;font-size:11px;color:#333;">3 550,00</div>
<div class="t" style="right:108px;top:816.69px;font-size:11px;color:#333;">3 546,45</div>
<div class="t" style="right:468px;top:831.69px;font-size:11px;color:#333;">7 092,90</div>
<div class="t" style="right:384px;top:831.69px;font-size:11px;color:#333;">7 096,45</div>
<div class="t" style="right:300px;top:831.69px;font-size:11px;color:#55602a;">3 550,00</div>
<div class="t" style="right:108px;top:831.69px;font-size:11px;color:#333;">3 546,45</div>
<div class="t" style="right:384px;top:846.69px;font-size:11px;color:#333;">3,55</div>
<div class="t" style="right:384px;top:861.69px;font-size:11px;color:#333;">7 092,90</div>
<div class="t" style="right:300px;top:876.69px;font-size:11px;color:#333;">3 550,00</div>
<svg class="a" style="left:0;top:0;filter:drop-shadow(3px 3px 3px rgba(0,0,0,.55))" width="1254" height="912" viewBox="0 0 1254 912"><g transform="translate(836.2 460.5) rotate(19.68)"><path d="M0 0 L23 -10 L20.6 -4.5 L265.8 -0.45 L265.8 0.45 L20.6 4.5 L23 10 Z" fill="#ff0000" stroke="#fff" stroke-width="2.6" stroke-linejoin="miter" paint-order="stroke"/></g><g transform="translate(945.4 824.1) rotate(-62.76)"><path d="M0 0 L23 -10 L20.6 -4.5 L308.3 -0.45 L308.3 0.45 L20.6 4.5 L23 10 Z" fill="#ff0000" stroke="#fff" stroke-width="2.6" stroke-linejoin="miter" paint-order="stroke"/></g></svg>
</div></div>
</body></html>
